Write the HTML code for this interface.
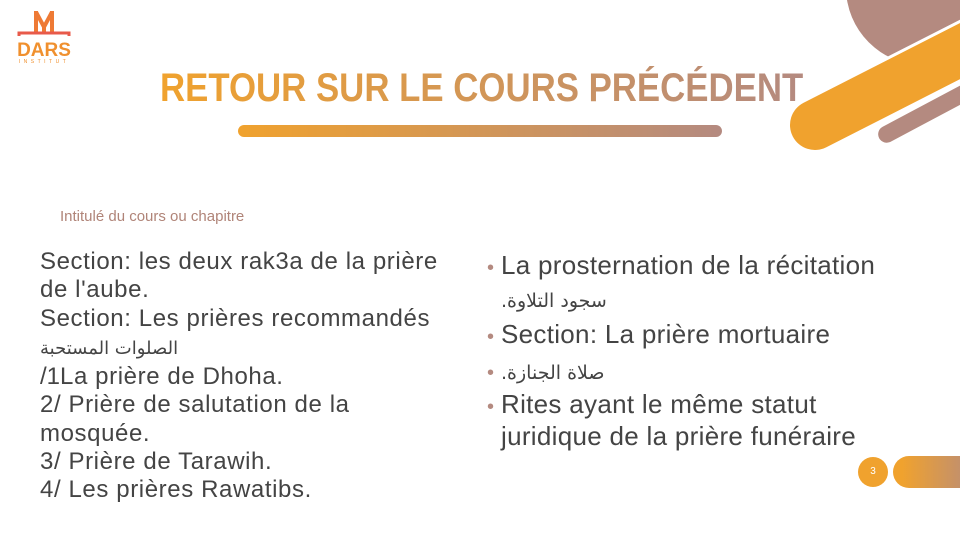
<!DOCTYPE html>
<html><head><meta charset="utf-8"><style>
body{margin:0;width:960px;height:540px;overflow:hidden;background:#fff;position:relative;font-family:"Liberation Sans","DejaVu Sans",sans-serif;}
.abs{position:absolute}
.title{left:160px;top:66px;font-weight:bold;font-size:40px;letter-spacing:0px;white-space:nowrap;
background:linear-gradient(90deg,#f0a22e,#b48a80);-webkit-background-clip:text;background-clip:text;color:transparent;transform:scaleX(0.87);transform-origin:left top;}
.bar{left:238px;top:125px;width:484px;height:12px;border-radius:6px;background:linear-gradient(90deg,#f0a22e,#b48a80)}
.sub{left:60px;top:208px;font-size:15px;color:#b08478}
.left{left:40px;top:248px;font-size:24px;letter-spacing:0.6px;line-height:28.3px;color:#444;width:415px}
.right{left:487px;top:251px;font-size:26px;letter-spacing:0.3px;line-height:29.5px;color:#444;width:420px}
.right p{margin:0 0 4px 0;padding-left:14px;text-indent:-14px}
.b{color:#b48a80;font-size:20px;display:inline-block;width:14px;text-indent:0}
.ar{font-family:"DejaVu Sans",sans-serif;letter-spacing:0}
</style></head><body>
<div class="abs" style="left:846px;top:-90px;width:155px;height:155px;border-radius:50%;background:#b48a80"></div>
<div class="abs" style="left:790px;top:100px;width:260px;height:50px;border-radius:25px;background:#f0a22e;transform:rotate(-27deg);transform-origin:25px 25px;box-shadow:0 0 0 3px #fff;"></div>
<div class="abs" style="left:878px;top:126px;width:160px;height:17px;border-radius:9px;background:#b48a80;transform:rotate(-28deg);transform-origin:8px 8px;"></div>
<svg class="abs" style="left:14px;top:8px" width="62" height="58" viewBox="0 0 62 58">
<path d="M22 3 L22 24 M22 4 L30 19 L38 4 M38 3 L38 24 M30 19 L30 24" stroke="#ee7a35" stroke-width="4" fill="none"/>
<path d="M5 28 L5 25 L55 25 L55 28" stroke="#e85a4a" stroke-width="3" fill="none"/>
<text x="30" y="48" text-anchor="middle" font-family="Liberation Sans" font-weight="bold" font-size="19" fill="#f0902e">DARS</text>
<text x="30" y="55" text-anchor="middle" font-family="Liberation Sans" font-size="5" letter-spacing="3.5" fill="#f0902e">INSTITUT</text>
</svg>
<div class="abs title">RETOUR SUR LE COURS PRÉCÉDENT</div>
<div class="abs bar"></div>
<div class="abs sub">Intitulé du cours ou chapitre</div>
<div class="abs left">Section: les deux rak3a de la prière de l'aube.<br>Section: Les prières recommandés<br><span class="ar" style="font-size:18px;letter-spacing:0">الصلوات المستحبة</span><br>/1La prière de Dhoha.<br>2/ Prière de salutation de la mosquée.<br>3/ Prière de Tarawih.<br>4/ Les prières Rawatibs.</div>
<div class="abs right">
<p><span class="b">•</span>La prosternation de la récitation <span class="ar" style="font-size:19px">.سجود التلاوة</span></p>
<p><span class="b">•</span>Section: La prière mortuaire</p>
<p style="line-height:26px"><span class="b">•</span><span class="ar" style="font-size:19px">.صلاة الجنازة</span></p>
<p><span class="b">•</span>Rites ayant le même statut juridique de la prière funéraire</p>
</div>
<div class="abs" style="left:858px;top:457px;width:30px;height:30px;border-radius:50%;background:#f0a22e;color:#fff;font-size:10px;text-align:center;line-height:30px">3</div>
<div class="abs" style="left:893px;top:456px;width:90px;height:32px;border-radius:16px;background:linear-gradient(90deg,#f0a22e 10%,#b48a80)"></div>
</body></html>
